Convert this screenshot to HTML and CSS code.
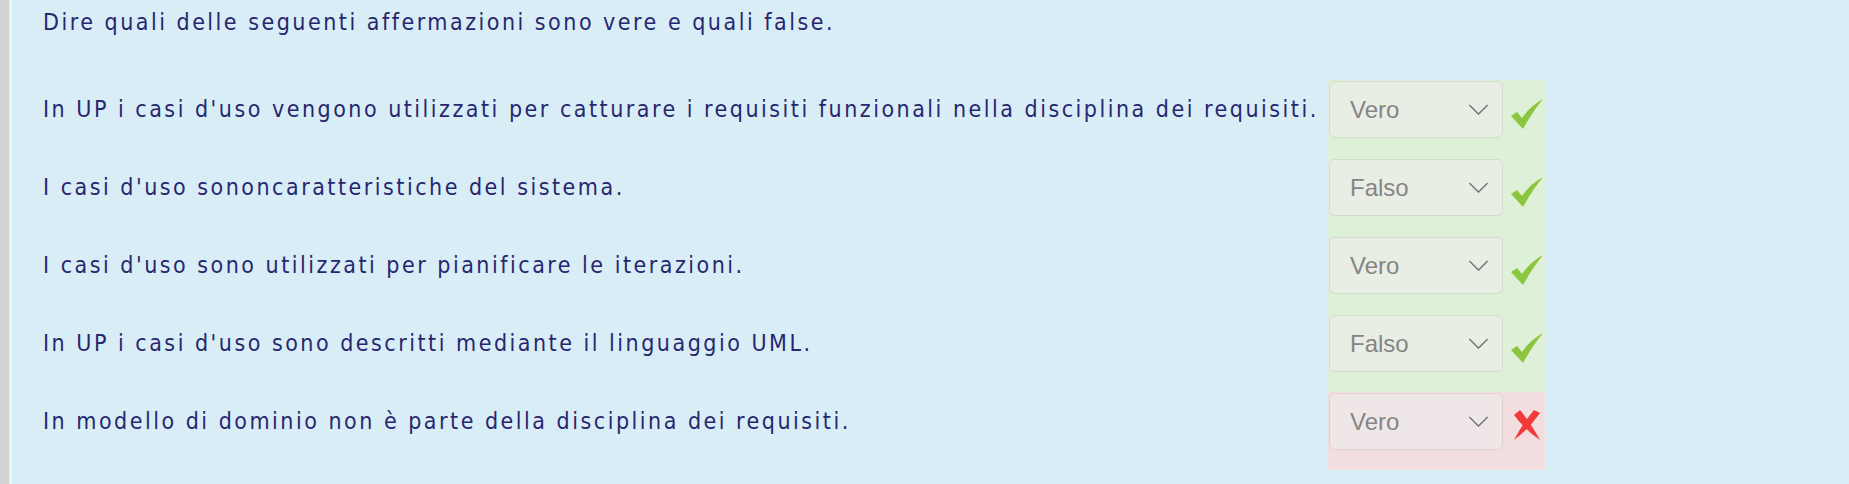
FILE: index.html
```html
<!DOCTYPE html>
<html lang="it">
<head>
<meta charset="utf-8">
<title>Domanda</title>
<link rel="stylesheet" href="styles.css">
</head>
<body>
<div class="frame">
  <div class="edge"></div>
  <div class="content">
    <div class="qtext">Dire quali delle seguenti affermazioni sono vere e quali false.</div>
    <div class="rows">
      <div class="row">
        <div class="stem">In UP i casi d'uso vengono utilizzati per catturare i requisiti funzionali nella disciplina dei requisiti.</div>
        <div class="control correct">
          <div class="select"><span>Vero</span><svg class="chev" viewBox="0 0 22 12"><path d="M1 1 L11 11 L21 1"/></svg></div>
          <svg class="mark ok" viewBox="0 0 32 30"><path d="M0 17 L6 13 L11 19 Q19 7 32 0 Q22 12 12 30 Z"/></svg>
        </div>
      </div>
      <div class="row">
        <div class="stem">I casi d'uso sononcaratteristiche del sistema.</div>
        <div class="control correct">
          <div class="select"><span>Falso</span><svg class="chev" viewBox="0 0 22 12"><path d="M1 1 L11 11 L21 1"/></svg></div>
          <svg class="mark ok" viewBox="0 0 32 30"><path d="M0 17 L6 13 L11 19 Q19 7 32 0 Q22 12 12 30 Z"/></svg>
        </div>
      </div>
      <div class="row">
        <div class="stem">I casi d'uso sono utilizzati per pianificare le iterazioni.</div>
        <div class="control correct">
          <div class="select"><span>Vero</span><svg class="chev" viewBox="0 0 22 12"><path d="M1 1 L11 11 L21 1"/></svg></div>
          <svg class="mark ok" viewBox="0 0 32 30"><path d="M0 17 L6 13 L11 19 Q19 7 32 0 Q22 12 12 30 Z"/></svg>
        </div>
      </div>
      <div class="row">
        <div class="stem">In UP i casi d'uso sono descritti mediante il linguaggio UML.</div>
        <div class="control correct">
          <div class="select"><span>Falso</span><svg class="chev" viewBox="0 0 22 12"><path d="M1 1 L11 11 L21 1"/></svg></div>
          <svg class="mark ok" viewBox="0 0 32 30"><path d="M0 17 L6 13 L11 19 Q19 7 32 0 Q22 12 12 30 Z"/></svg>
        </div>
      </div>
      <div class="row">
        <div class="stem">In modello di dominio non è parte della disciplina dei requisiti.</div>
        <div class="control incorrect">
          <div class="select"><span>Vero</span><svg class="chev" viewBox="0 0 22 12"><path d="M1 1 L11 11 L21 1"/></svg></div>
          <svg class="mark ko" viewBox="0 0 26 30"><path d="M0 5 L6 0 Q16 12 26 30 Q11 20 0 5 Z"/><path d="M26 3 L20 0 Q9 13 0 30 Q15 19 26 3 Z"/></svg>
        </div>
      </div>
    </div>
  </div>
</div>
</body>
</html>
```

FILE: styles.css
```css
html, body {
  margin: 0;
  padding: 0;
  background: #d9edf7;
}
.frame {
  display: flex;
  min-height: 484px;
  background: #d9edf7;
}
.edge {
  width: 9px;
  background: #d3d3d3;
  border-right: 3px solid #e9f4f9;
  flex: none;
}
.content {
  flex: 1;
  font-family: "DejaVu Sans Condensed", "DejaVu Sans", sans-serif;
  font-size: 23px;
  color: #27276f;
}
.qtext {
  padding-left: 31px;
  line-height: 44px;
  height: 44px;
  letter-spacing: 2.5px;
}
.rows {
  margin-top: 36px;
  display: flex;
  flex-direction: column;
}
.row {
  display: flex;
  align-items: flex-start;
}
.stem {
  width: 1284px;
  padding-left: 31px;
  line-height: 57px;
  margin-top: 1px;
  letter-spacing: 2.5px;
  white-space: nowrap;
}
.control {
  width: 214px;
  padding: 1px 2px 20px 2px;
  display: flex;
  align-items: flex-start;
}
.correct { background: #dff0d8; }
.incorrect { background: #f2dede; }
.select {
  box-sizing: border-box;
  width: 174px;
  height: 57px;
  border: 1px solid #d3dbcd;
  border-radius: 6px;
  background: #e9eee4;
  display: flex;
  align-items: center;
  justify-content: space-between;
  padding: 0 13px 0 20px;
  font-family: "Liberation Sans", Arial, sans-serif;
  font-size: 24px;
  color: #858585;
}
.incorrect .select {
  background: #efe7e7;
  border-color: #e2cfcf;
}
.chev {
  width: 21px;
  height: 11px;
}
.chev path {
  fill: none;
  stroke: #777;
  stroke-width: 1.6;
}
.mark {
  flex: none;
}
.ok {
  width: 32px;
  height: 30px;
  margin: 18px 0 0 8px;
  fill: #8cc63e;
}
.ko {
  width: 26px;
  height: 30px;
  margin: 17px 0 0 11px;
  fill: #f23a3a;
}
```
